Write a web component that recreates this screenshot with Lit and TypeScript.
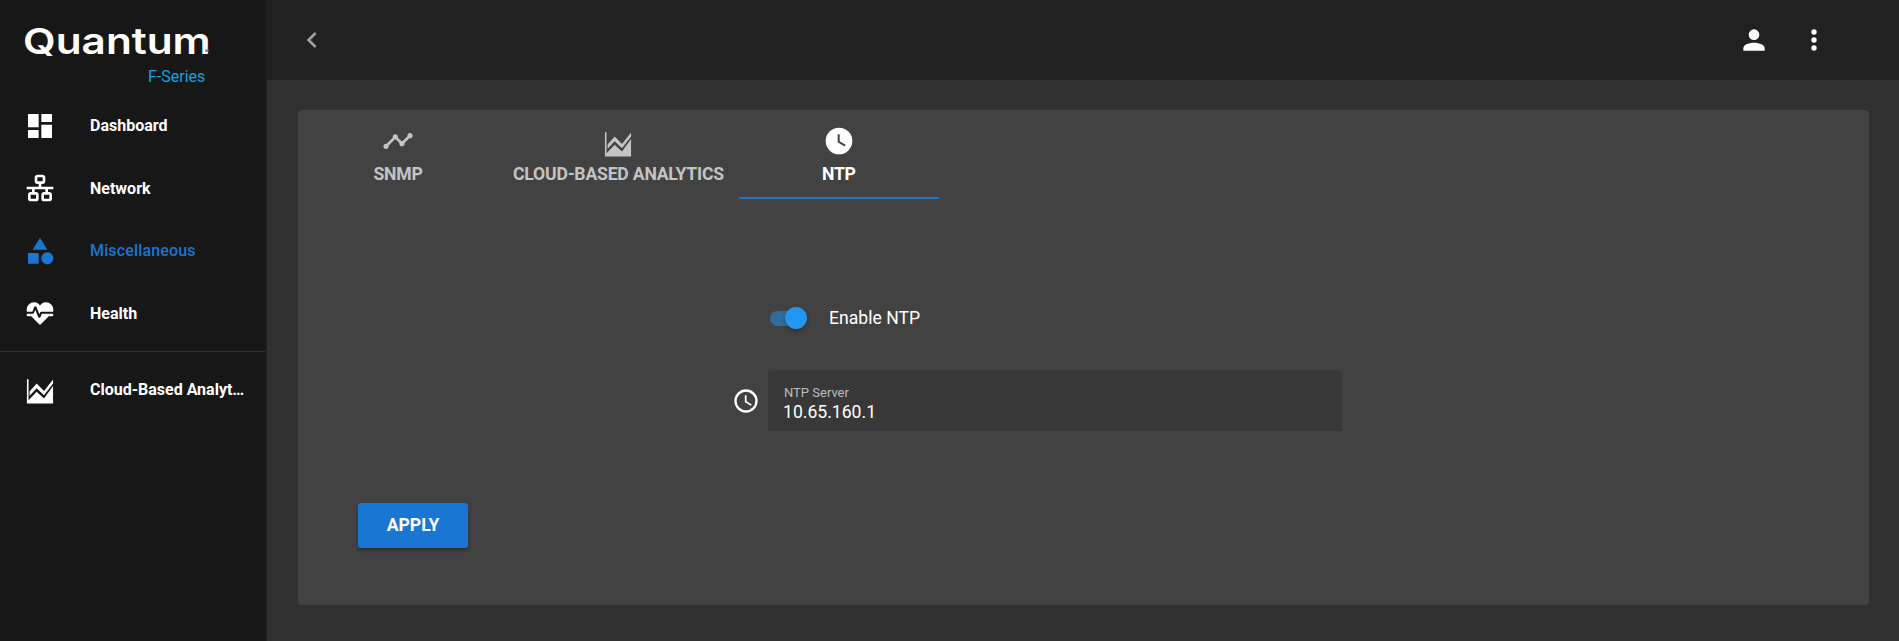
import { LitElement, html, css, svg } from "lit";
import { customElement } from "lit/decorators.js";

const P = {
  dashboard: "M3 13h8V3H3v10zm0 8h8v-6H3v6zm10 0h8V11h-8v10zm0-18v6h8V3h-8z",
  lan: "M10,2C8.89,2 8,2.89 8,4V7C8,8.11 8.89,9 10,9H11V11H2V13H6V15H5C3.89,15 3,15.89 3,17V20C3,21.11 3.89,22 5,22H9C10.11,22 11,21.11 11,20V17C11,15.89 10.11,15 9,15H8V13H16V15H15C13.89,15 13,15.89 13,17V20C13,21.11 13.89,22 15,22H19C20.11,22 21,21.11 21,20V17C21,15.89 20.11,15 19,15H18V13H22V11H13V9H14C15.11,9 16,8.11 16,7V4C16,2.89 15.11,2 14,2H10M10,4H14V7H10V4M5,17H9V20H5V17M15,17H19V20H15V17Z",
  shape: "M11,13.5V21.5H3V13.5H11M12,2L17.5,11H6.5L12,2M17.5,13C20,13 22,15 22,17.5C22,20 20,22 17.5,22C15,22 13,20 13,17.5C13,15 15,13 17.5,13Z",
  heart: "M7.5,4A5.5,5.5 0 0,0 2,9.5C2,10 2.09,10.5 2.22,11H6.3L7.57,7.63C7.87,6.83 9.05,6.75 9.43,7.63L11.5,13L12.09,11.58C12.22,11.25 12.57,11 13,11H21.78C21.91,10.5 22,10 22,9.5A5.5,5.5 0 0,0 16.5,4C14.64,4 13,4.93 12,6.41C11,4.93 9.36,4 7.5,4M3,12.5A1,1 0 0,0 2,13.5A1,1 0 0,0 3,14.5H5.44L11,20C12,20.9 12,20.9 13,20L18.56,14.5H21A1,1 0 0,0 22,13.5A1,1 0 0,0 21,12.5H13.4L12.47,14.8C12.07,15.81 10.92,15.67 10.55,14.83L8.5,9.5L7.54,11.83C7.39,12.21 7.05,12.5 6.6,12.5H3Z",
  chart: "M2.2 4H3.4V19.6L9.5 13.4L15 18.4L21.8 9V22.2H2.2ZM4.2 13.2L9.5 7.2L15 12.8L21.8 4.2V7.2L15 16L9.5 10.6L4.2 16.4Z",
  timeline: "M23 8c0 1.1-.9 2-2 2-.18 0-.35-.02-.51-.07l-3.56 3.55c.05.16.07.34.07.52 0 1.1-.9 2-2 2s-2-.9-2-2c0-.18.02-.36.07-.52l-2.55-2.55c-.16.05-.34.07-.52.07s-.36-.02-.52-.07l-4.55 4.56c.05.16.07.33.07.51 0 1.1-.9 2-2 2s-2-.9-2-2 .9-2 2-2c.18 0 .35.02.51.07l4.56-4.55C8.02 9.36 8 9.18 8 9c0-1.1.9-2 2-2s2 .9 2 2c0 .18-.02.36-.07.52l2.55 2.55c.16-.05.34-.07.52-.07s.36.02.52.07l3.55-3.56C19.02 8.35 19 8.18 19 8c0-1.1.9-2 2-2s2 .9 2 2z",
  clock: "M12,2A10,10 0 0,0 2,12A10,10 0 0,0 12,22A10,10 0 0,0 22,12A10,10 0 0,0 12,2M16.2,16.2L11,13V7H12.5V12.2L17,14.9L16.2,16.2Z",
  clockOutline: "M12,20A8,8 0 0,0 20,12A8,8 0 0,0 12,4A8,8 0 0,0 4,12A8,8 0 0,0 12,20M12,2A10,10 0 0,1 22,12A10,10 0 0,1 12,22C6.47,22 2,17.5 2,12A10,10 0 0,1 12,2M12.5,7V12.25L17,14.92L16.25,16.15L11,13V7H12.5Z",
  account: "M12,4A4,4 0 0,1 16,8A4,4 0 0,1 12,12A4,4 0 0,1 8,8A4,4 0 0,1 12,4M12,14C16.42,14 20,15.79 20,18V20H4V18C4,15.79 7.58,14 12,14Z",
  dots: "M12,16A2,2 0 0,1 14,18A2,2 0 0,1 12,20A2,2 0 0,1 10,18A2,2 0 0,1 12,16M12,10A2,2 0 0,1 14,12A2,2 0 0,1 12,14A2,2 0 0,1 10,12A2,2 0 0,1 12,10M12,4A2,2 0 0,1 14,6A2,2 0 0,1 12,8A2,2 0 0,1 10,6A2,2 0 0,1 12,4Z",
  chevron: "M15.41,16.58L10.83,12L15.41,7.41L14,6L8,12L14,18L15.41,16.58Z",
};

const icon = (d: string, cls = "") =>
  html`<svg class="icon ${cls}" viewBox="0 0 24 24" fill="currentColor">${svg`<path d=${d}></path>`}</svg>`;

@customElement("app-root")
export class AppRoot extends LitElement {
  static styles = css`
    :host {
      display: flex;
      height: 100vh;
      overflow: hidden;
      background: #303030;
      color: #fff;
      font-family: Roboto, "Liberation Sans", sans-serif;
    }
    .icon { width: 32px; height: 32px; display: block; flex: none; }
    .sidebar {
      width: 265px;
      flex: none;
      background: #171717;
      border-right: 2px solid #1d1d1d;
      display: flex;
      flex-direction: column;
    }
    .logo {
      height: 94.5px;
      padding: 19px 0 0 23px;
      box-sizing: border-box;
    }
    .logo-word {
      position: relative;
      font-family: Inter, "Liberation Sans", sans-serif;
      font-weight: 600;
      font-size: 36px;
      line-height: 44px;
      height: 44px;
      width: 150px;
      transform-origin: left top;
      transform: scaleX(1.175);
      white-space: nowrap;
      display: block;
    }
    .logo-dot {
      position: absolute;
      left: 155px;
      top: 30px;
      width: 3px;
      height: 3px;
      border-radius: 50%;
      background: #8a8a8a;
    }
    .logo-sub {
      display: block;
      margin: 5px 0 0 125px;
      font-size: 16px;
      line-height: 18px;
      color: #0ea5e0;
    }
    .nav { display: flex; flex-direction: column; }
    .item {
      height: 62.5px;
      display: flex;
      align-items: center;
      padding-left: 24px;
      gap: 34px;
      font-size: 16px;
      font-weight: 700;
      white-space: nowrap;
    }
    .item.active { color: #1976d2; font-weight: 500; letter-spacing: 0.15px; }
    .item .label { width: 155px; overflow: hidden; text-overflow: ellipsis; }
    .divider { height: 1px; background: #333; margin-top: 6px; }
    .item.cloud { margin-top: 7px; }
    .main { flex: 1; display: flex; flex-direction: column; min-width: 0; }
    .topbar {
      height: 80px;
      flex: none;
      background: #212121;
      display: flex;
      align-items: center;
      padding: 0 69px 0 29px;
    }
    .topbar .back { color: #9e9e9e; }
    .spacer { flex: 1; }
    .topbar .user { margin-right: 28px; }
    .content { flex: 1; padding: 30px 30px 36px 31px; display: flex; min-height: 0; }
    .card {
      flex: 1;
      background: #424242;
      border-radius: 4px;
      display: flex;
      flex-direction: column;
    }
    .tabs { display: flex; height: 90px; flex: none; }
    .tab {
      min-width: 200px;
      padding: 15px 15px 0;
      box-sizing: border-box;
      display: flex;
      flex-direction: column;
      align-items: center;
      gap: 7px;
      font-size: 17.6px;
      font-weight: 700;
      letter-spacing: -0.2px;
      text-transform: uppercase;
      color: #c4c4c4;
      border-bottom: 2px solid transparent;
      height: 89px;
    }
    .tab .shifted { margin: 2px 0 -2px; }
    .tab.active { color: #fff; border-bottom-color: #1976d2; }
    .form {
      padding: 0 0 0 435px;
      display: flex;
      flex-direction: column;
    }
    .switch-row {
      margin: 0 0 0 37px;
      padding-top: 100px;
      height: 36px;
      display: flex;
      align-items: center;
      gap: 22px;
      font-size: 17.6px;
      font-weight: 400;
    }
    .switch { width: 37px; height: 22px; position: relative; flex: none; }
    .track {
      width: 36px; height: 15px; border-radius: 8px; background: #2196f3; opacity: 0.5;
      margin-top: 4px;
    }
    .thumb {
      position: absolute; right: 0; top: 0;
      width: 22px; height: 22px; border-radius: 50%;
      background: #2196f3;
      box-shadow: 0 2px 4px rgba(0,0,0,.3);
    }
    .field-row {
      margin-top: 34px;
      display: flex;
      align-items: center;
      gap: 8px;
    }
    .field-row .icon { width: 28px; height: 28px; margin-left: -1px; }
    .field {
      width: 574px;
      height: 61px;
      box-sizing: border-box;
      background: #383838;
      border-radius: 4px 4px 0 0;
      padding: 16px 15px 0 16px;
    }
    .field-label { font-size: 13px; line-height: 14px; color: #bdbdbd; }
    .field-value { font-size: 17.6px; line-height: 22px; color: #fff; margin: 1px 0 0 -1px; }
    .actions { margin: 72px 0 0 60px; }
    .apply {
      width: 110px; height: 45px;
      display: flex; align-items: center; justify-content: center;
      background: #1976d2;
      border-radius: 3px;
      color: #fff;
      font-size: 17.6px;
      font-weight: 700;
      padding-bottom: 1px;
      box-sizing: border-box;
      box-shadow: 0 3px 3px -2px rgba(0,0,0,.3), 0 2px 4px rgba(0,0,0,.25);
    }
  `;

  render() {
    return html`
      <aside class="sidebar">
        <div class="logo">
          <span class="logo-word">Quantum<span class="logo-dot"></span></span>
          <span class="logo-sub">F-Series</span>
        </div>
        <nav class="nav">
          <div class="item">${icon(P.dashboard)}<span class="label">Dashboard</span></div>
          <div class="item">${icon(P.lan)}<span class="label">Network</span></div>
          <div class="item active">${icon(P.shape)}<span class="label">Miscellaneous</span></div>
          <div class="item">${icon(P.heart)}<span class="label">Health</span></div>
          <div class="divider"></div>
          <div class="item cloud">${icon(P.chart)}<span class="label">Cloud-Based Analytics</span></div>
        </nav>
      </aside>
      <div class="main">
        <header class="topbar">
          ${icon(P.chevron, "back")}
          <div class="spacer"></div>
          ${icon(P.account, "user")}
          ${icon(P.dots)}
        </header>
        <div class="content">
          <section class="card">
            <div class="tabs">
              <div class="tab">${icon(P.timeline)}<span>SNMP</span></div>
              <div class="tab">${icon(P.chart, "shifted")}<span>Cloud-Based Analytics</span></div>
              <div class="tab active">${icon(P.clock)}<span>NTP</span></div>
            </div>
            <div class="form">
              <div class="switch-row">
                <div class="switch"><div class="track"></div><div class="thumb"></div></div>
                <span>Enable NTP</span>
              </div>
              <div class="field-row">
                ${icon(P.clockOutline)}
                <div class="field">
                  <div class="field-label">NTP Server</div>
                  <div class="field-value">10.65.160.1</div>
                </div>
              </div>
            </div>
            <div class="actions"><div class="apply">APPLY</div></div>
          </section>
        </div>
      </div>
    `;
  }
}
